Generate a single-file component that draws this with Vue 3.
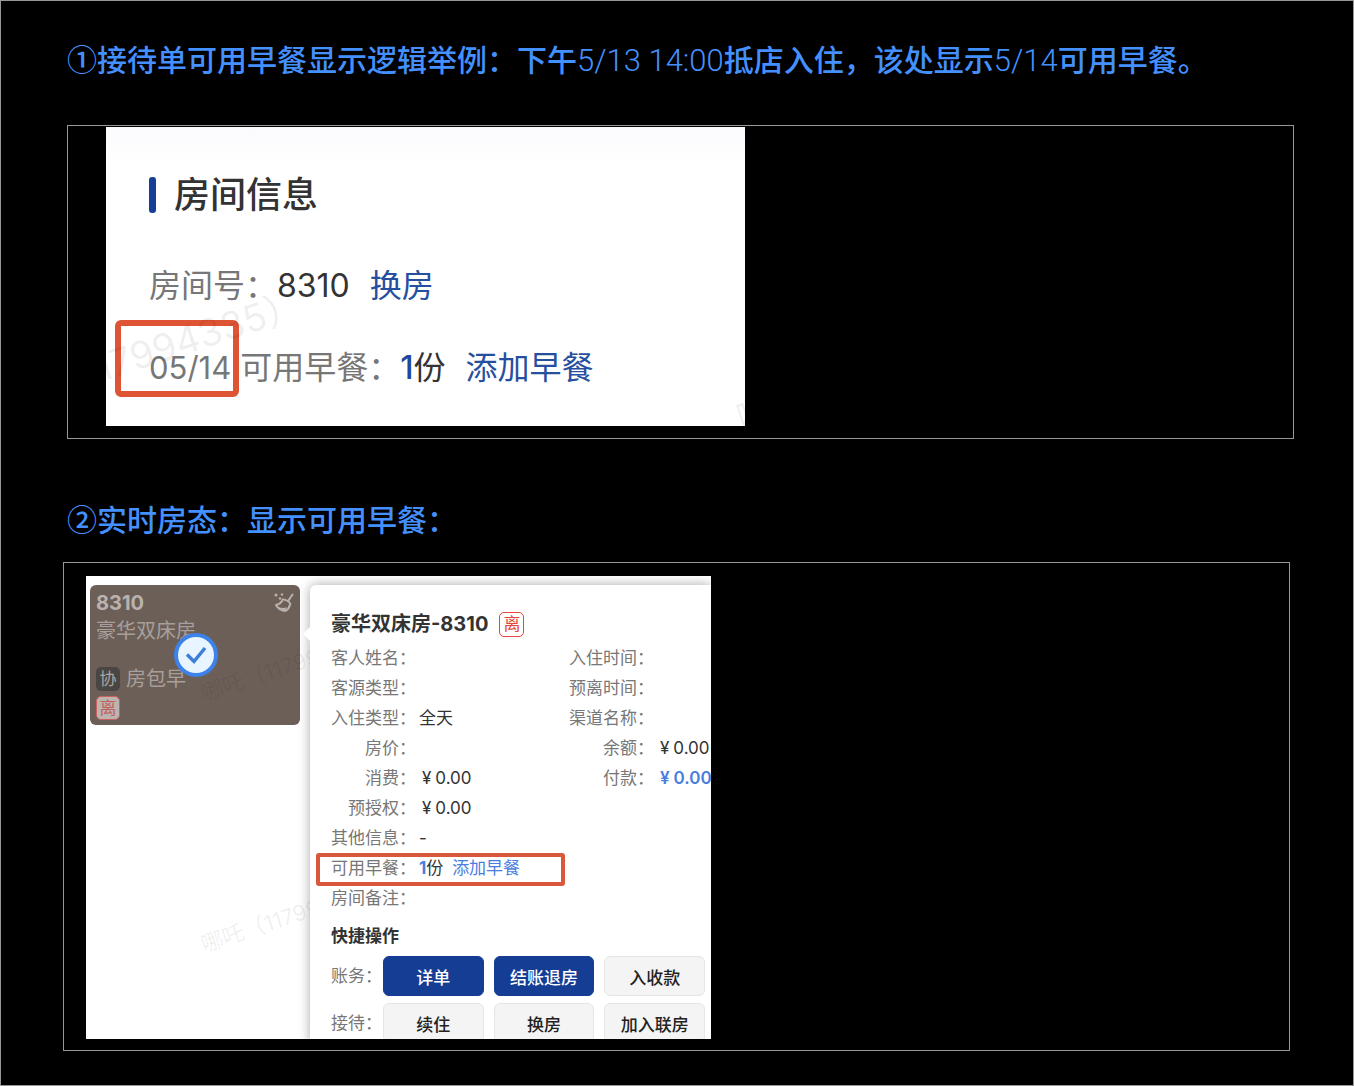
<script setup>
const infoRows = [
  [{ label: "客人姓名" }, { label: "入住时间" }],
  [{ label: "客源类型" }, { label: "预离时间" }],
  [{ label: "入住类型", value: "全天" }, { label: "渠道名称" }],
  [{ label: "房价" }, { label: "余额", value: "0.00", money: true }],
  [
    { label: "消费", value: "0.00", money: true },
    { label: "付款", value: "0.00", money: true, pay: true },
  ],
  [{ label: "预授权", value: "0.00", money: true }],
  [{ label: "其他信息", value: "-" }],
  [{ label: "可用早餐", breakfast: 1 }],
  [{ label: "房间备注" }],
];

const actions = [
  {
    label: "账务",
    buttons: [
      { text: "详单", primary: true },
      { text: "结账退房", primary: true },
      { text: "入收款" },
    ],
  },
  {
    label: "接待",
    buttons: [{ text: "续住" }, { text: "换房" }, { text: "加入联房" }],
  },
];
</script>

<template>
  <main class="page">
    <h2 class="heading">
      ①接待单可用早餐显示逻辑举例：下午<span class="num">5/13 14:00</span>抵店入住，该处显示<span class="num">5/14</span>可用早餐。
    </h2>
    <section class="frame frame-order">
      <div class="order">
        <h3 class="order-title">房间信息</h3>
        <div class="order-row">
          <span class="muted">房间号：</span>
          <span>8310</span>
          <a class="order-link" href="#">换房</a>
        </div>
        <div class="order-row order-breakfast">
          <span class="muted date">05/14</span>
          <span class="muted">可用早餐：</span>
          <span><b class="count">1</b>份</span>
          <a class="order-link" href="#">添加早餐</a>
        </div>
        <span class="mark mark-order">17994335）</span>
        <span class="mark mark-corner">哪</span>
      </div>
    </section>

    <h2 class="heading heading-second">②实时房态：显示可用早餐：</h2>
    <section class="frame frame-state">
      <div class="state">
        <div class="room">
          <div class="room-no">
            8310
            <svg class="broom" viewBox="0 0 20 20" fill="none" stroke="currentColor">
              <circle cx="2" cy="2" r="1.6" fill="currentColor" stroke="none" />
              <circle cx="8" cy="1.5" r="1.2" fill="currentColor" stroke="none" />
              <circle cx="6" cy="5.5" r="1.2" fill="currentColor" stroke="none" />
              <path d="M18.5 1.5L14.5 7.5" stroke-width="2" stroke-linecap="round" />
              <path d="M8.5 6.5C11 6.5 15 8 16.5 11" stroke-width="2" stroke-linecap="round" />
              <path d="M8.5 7.5C7 10 4.5 11.5 2 12C4 15.5 8 18 11.5 18C14 16.5 15.5 14 16 11.5" stroke-width="2" stroke-linejoin="round" />
              <path d="M4 13.5C7 15.5 10 15 13 14.5L11 17.5C8.5 17.5 6 16 4 13.5Z" fill="currentColor" stroke="none" />
            </svg>
          </div>
          <div class="room-type">豪华双床房</div>
          <div class="room-plan"><span class="tag tag-dark">协</span>房包早</div>
          <span class="tag tag-leave">离</span>
          <svg class="check" viewBox="0 0 44 44" fill="none">
            <circle cx="22" cy="22" r="20" fill="#e8f4ff" stroke="#3d82e8" stroke-width="4" />
            <path d="M13 21.5L20 28.5L31 15" stroke="#3d7fd6" stroke-width="3.5" />
          </svg>
        </div>
        <span class="mark mark-room">哪吒（117994335）</span>
        <span class="mark mark-below">哪吒（117994335）</span>

        <div class="pop">
          <h3 class="pop-title">豪华双床房-8310<span class="tag tag-red">离</span></h3>
          <dl class="info">
            <div v-for="(row, i) of infoRows" :key="i" class="info-row">
              <div v-for="item of row" :key="item.label" class="info-item" :class="{ boxed: item.breakfast }">
                <dt>{{ item.label }}：</dt>
                <dd v-if="item.breakfast">
                  <b class="blue">{{ item.breakfast }}</b>份
                  <a class="blue add" href="#">添加早餐</a>
                </dd>
                <dd v-else :class="{ pay: item.pay }">
                  <span v-if="item.money" class="yen">¥</span>{{ item.value }}
                </dd>
              </div>
            </div>
          </dl>
          <h4 class="quick">快捷操作</h4>
          <div class="actions">
            <div v-for="group of actions" :key="group.label" class="action-row">
              <span class="action-label">{{ group.label }}：</span>
              <button v-for="btn of group.buttons" :key="btn.text" type="button" class="btn" :class="{ primary: btn.primary }">
                {{ btn.text }}
              </button>
            </div>
          </div>
        </div>
      </div>
    </section>
  </main>
</template>

<style>
body {
  background: #000;
}
</style>

<style scoped>
.page {
  box-sizing: border-box;
  min-height: 100vh;
  border: 1px solid #979797;
  padding: 37px 59px 34px 66px;
  background: #000;
  font-family: Inter, "Noto Sans CJK SC", sans-serif;
}
h2,
h3,
h4,
dl,
dd {
  margin: 0;
}
a {
  text-decoration: none;
}

.heading {
  color: #4490ff;
  font: 500 30px/40px "Noto Sans CJK SC", sans-serif;
}
.heading-second {
  margin-top: 59px;
}
.num {
  font-family: Roboto, sans-serif;
  font-size: 31px;
  font-weight: 300;
  line-height: 1;
}
.frame {
  border: 1px solid #979797;
}
.frame-order {
  margin-top: 47px;
  padding: 1px 38px 12px;
}
.frame-state {
  margin: 24px 4px 0 -4px;
  padding: 13px 22px 11px;
}

/* 接待单 */
.order {
  position: relative;
  box-sizing: border-box;
  max-width: 639px;
  padding: 50px 43px 38px;
  overflow: hidden;
  background: linear-gradient(#fbfbfe, #fff 40px);
  color: #333;
  font-size: 32px;
  line-height: 40px;
}
.order-title {
  display: flex;
  gap: 18px;
  margin-bottom: 53px;
  font-size: 36px;
  font-weight: 500;
  line-height: 36px;
}
.order-title::before {
  content: "";
  width: 7px;
  border-radius: 3px;
  background: #163f98;
}
.order-row {
  display: flex;
}
.order-breakfast {
  margin-top: 42px;
}
.muted {
  color: #777;
}
.date {
  position: relative;
  margin-right: 9px;
  font-size: 31px;
}
.date::after {
  content: "";
  position: absolute;
  inset: -28px -8px -9px -34px;
  border: 6px solid #df5435;
  border-radius: 6px;
}
.order-link {
  margin-left: 20px;
  color: #274f9f;
}
.count {
  color: #1f489c;
  font-weight: 500;
}

/* 水印 */
.mark {
  position: absolute;
  color: rgba(0, 0, 0, 0.07);
  white-space: nowrap;
  transform: rotate(-18deg);
  transform-origin: 0 100%;
  pointer-events: none;
}
.mark-order {
  left: -4px;
  bottom: 38px;
  font-size: 38px;
}
.mark-corner {
  left: 638px;
  bottom: -12px;
  font-size: 36px;
}
.mark-room,
.mark-below {
  left: 120px;
  font-size: 22px;
  line-height: 28px;
}
.mark-room {
  top: 103px;
}
.mark-below {
  top: 354px;
}

/* 房态 */
.state {
  position: relative;
  display: flex;
  align-items: flex-start;
  gap: 10px;
  box-sizing: border-box;
  max-width: 625px;
  padding: 9px 0 0 4px;
  overflow: hidden;
  background: #fff;
}
.room {
  position: relative;
  flex: none;
  box-sizing: border-box;
  width: 210px;
  padding: 4px 6px 5px;
  border-radius: 6px;
  background: #6c5f58;
  color: #a79f9b;
  font-size: 20px;
  line-height: 28px;
}
.room-no {
  display: flex;
  justify-content: space-between;
  align-items: center;
  color: #b9b2ae;
  font-weight: 700;
}
.broom {
  width: 20px;
  height: 20px;
}
.room-plan {
  display: flex;
  align-items: center;
  gap: 6px;
  margin: 20px 0 3px;
}
.tag {
  display: flex;
  justify-content: center;
  align-items: center;
  box-sizing: border-box;
  width: 24px;
  height: 24px;
  border-radius: 5px;
  font-size: 17px;
  font-weight: 400;
}
.tag-dark {
  background: #4a4643;
  color: #aaa5a2;
}
.tag-leave {
  border: 1px solid #c9615d;
  background: #bcb4b1;
  color: #c2605b;
}
.tag-red {
  width: 25px;
  height: 25px;
  border: 1px solid #e2463c;
  color: #e2463c;
}
.check {
  position: absolute;
  left: 84px;
  top: 48px;
  width: 44px;
  height: 44px;
}

.pop {
  position: relative;
  flex: 1;
  min-width: 0;
  margin-bottom: -4px;
  padding: 26px 0 0 21px;
  border-radius: 6px 0 0 0;
  background: #fff;
  box-shadow: 0 0 12px rgba(0, 0, 0, 0.35);
  color: #333;
  font-size: 17px;
  line-height: 30px;
}
.pop::before {
  content: "";
  position: absolute;
  left: -7px;
  top: 42px;
  border: 7px solid transparent;
  border-left: 0;
  border-right-color: #fff;
}
.pop-title {
  display: flex;
  align-items: center;
  gap: 11px;
  margin-bottom: 6px;
  font-size: 20px;
  line-height: 26px;
}
.info-row {
  display: grid;
  grid-template-columns: 238px 1fr;
}
.info-item {
  position: relative;
  display: flex;
  gap: 3px;
  height: 30px;
  white-space: nowrap;
}
.info-item dt {
  width: 85px;
  color: #777;
  text-align: right;
}
.boxed::after {
  content: "";
  position: absolute;
  inset: 0 4px -3px -15px;
  border: 4px solid #d9583b;
  border-radius: 3px;
  pointer-events: none;
}
.yen {
  margin: 0 4px 0 3px;
}
.pay {
  color: #4a7de0;
  font-weight: 600;
}
.blue {
  color: #4a7de0;
}
.add {
  margin-left: 4px;
}
.quick {
  margin: 10px 0 7px;
  font-size: 17px;
  line-height: 26px;
}
.actions {
  display: grid;
  gap: 7px;
}
.action-row {
  display: grid;
  grid-template-columns: 42px repeat(3, 1fr);
  align-items: center;
  gap: 10px;
  padding-right: 6px;
}
.action-label {
  color: #777;
  white-space: nowrap;
}
.btn {
  height: 40px;
  padding: 0;
  border: 1px solid #e6e6e6;
  border-radius: 6px;
  background: #f4f4f4;
  color: #222;
  font: 500 17px Inter, "Noto Sans CJK SC", sans-serif;
}
.btn.primary {
  border-color: #163d94;
  background: #163d94;
  color: #fff;
}
</style>
